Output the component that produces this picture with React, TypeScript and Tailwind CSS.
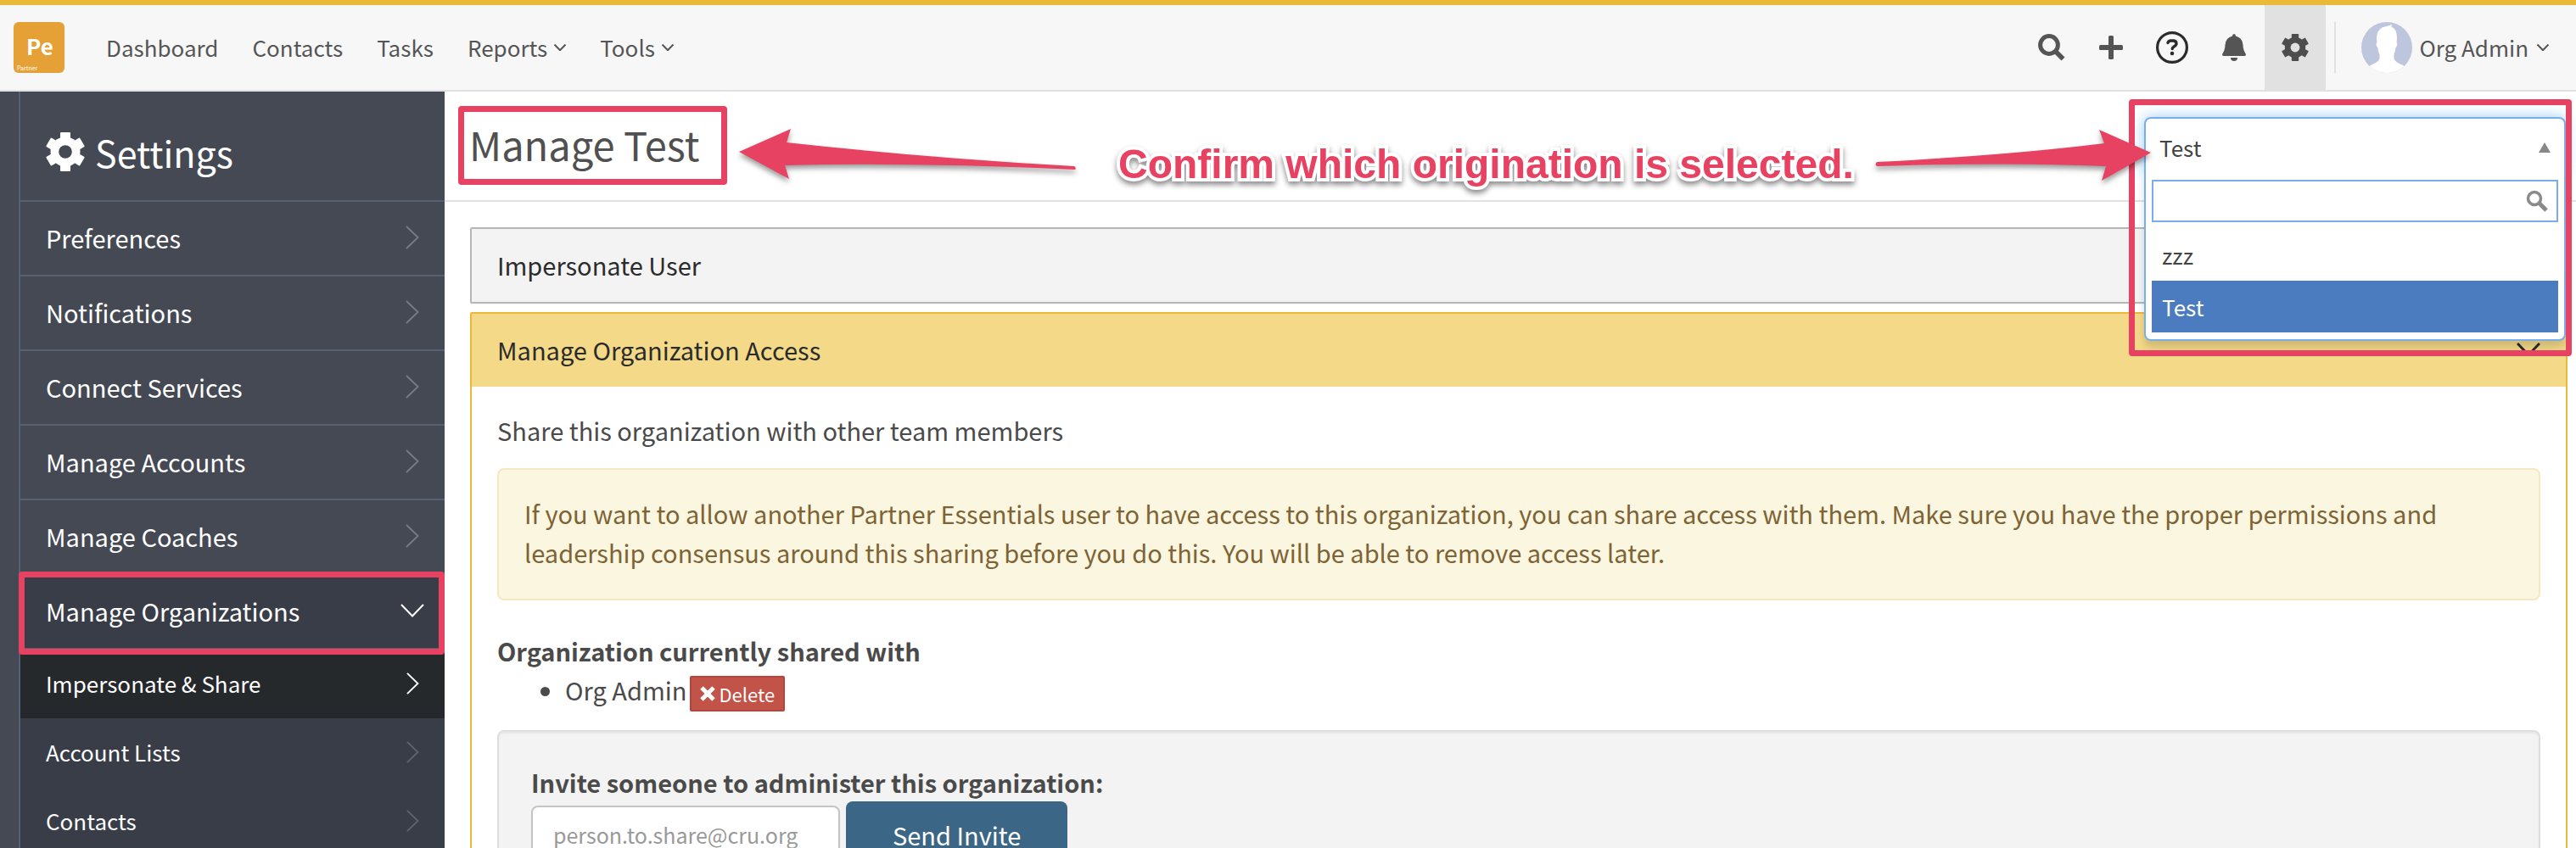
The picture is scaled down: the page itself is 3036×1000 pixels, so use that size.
import React, { useState } from "react";

type IconProps = { className: string };
type ChevronProps = IconProps & { width?: number };

function ChevronDown({ className, width = 1 }: ChevronProps) {
  return (
    <svg viewBox="0 0 28 16" fill="none" stroke="currentColor" strokeWidth={width} className={className} aria-hidden="true">
      <path d="M1 1 L14 14.5 L27 1" />
    </svg>
  );
}

function ChevronRight({ className, width = 1 }: ChevronProps) {
  return (
    <svg viewBox="0 0 16 28" fill="none" stroke="currentColor" strokeWidth={width} className={className} aria-hidden="true">
      <path d="M1 1 L14.5 14 L1 27" />
    </svg>
  );
}

function GearIcon({ className }: IconProps) {
  return (
    <svg viewBox="0 0 46 46" fill="currentColor" className={className} aria-hidden="true">
      <mask id="gear-hole">
        <rect width="46" height="46" fill="#fff" />
        <circle cx="23" cy="23" r="7.8" fill="#000" />
      </mask>
      <g mask="url(#gear-hole)">
        <circle cx="23" cy="23" r="17.5" />
        <rect x="17" y="0" width="12" height="46" rx="1" />
        <rect x="17" y="0" width="12" height="46" rx="1" transform="rotate(60 23 23)" />
        <rect x="17" y="0" width="12" height="46" rx="1" transform="rotate(120 23 23)" />
      </g>
    </svg>
  );
}

function SearchIcon({ className }: IconProps) {
  return (
    <svg viewBox="0 0 32 32" fill="none" stroke="currentColor" className={className} aria-hidden="true">
      <circle cx="13" cy="13" r="10.4" strokeWidth="5" />
      <path d="M21 21 L29.500 29.500" strokeWidth="5.600" />
    </svg>
  );
}

function PlusIcon({ className }: IconProps) {
  return (
    <svg viewBox="0 0 28 28" fill="currentColor" className={className} aria-hidden="true">
      <rect x="11" y="0" width="6" height="28" rx="1.5" />
      <rect x="0" y="11" width="28" height="6" rx="1.5" />
    </svg>
  );
}

function HelpIcon({ className }: IconProps) {
  return (
    <svg viewBox="0 0 38 38" fill="none" stroke="currentColor" className={className} aria-hidden="true">
      <circle cx="19" cy="19" r="17.400" strokeWidth="3.200" />
      <path d="M14 13.500 Q14.500 11 18 11 H20 Q24 11 24 14.300 Q24 16.500 21.500 17.800 Q19.200 19 19.200 20.500" strokeWidth="3.400" strokeLinecap="round" />
      <circle cx="19" cy="26" r="2.300" fill="currentColor" stroke="none" />
    </svg>
  );
}

function BellIcon({ className }: IconProps) {
  return (
    <svg viewBox="0 0 28 32" fill="currentColor" className={className} aria-hidden="true">
      <path d="M14 0 Q16 0 16 2.500 Q24 4.500 24.500 13 Q24.600 19 28 24 Q28 26 26.500 26 H1.500 Q0 26 0 24 Q3.400 19 3.500 13 Q4 4.500 12 2.500 Q12 0 14 0 Z" />
      <path d="M10 28 H18 Q18 32 14 32 Q10 32 10 28 Z" />
    </svg>
  );
}

function Logo() {
  return (
    <a href="#home" aria-label="Partner Essentials" className="flex size-[60px] flex-col justify-between rounded-md bg-[#e5a135] text-white">
      <span className="pt-3 pl-0.5 text-center text-[26px] leading-8 font-bold">Pe</span>
      <span className="pb-0.5 pl-1 text-[7px] leading-2">Partner</span>
    </a>
  );
}

function Avatar() {
  return (
    <svg viewBox="0 0 60 60" className="size-[60px]" aria-hidden="true">
      <defs>
        <clipPath id="avatar-clip">
          <circle cx="30" cy="30" r="30" />
        </clipPath>
      </defs>
      <g clipPath="url(#avatar-clip)">
        <rect width="60" height="60" fill="#bdc6dc" />
        <path
          fill="#fff"
          d="M18 20 C18 10 23 6 30 5 L36 3 L35.500 6 C40 7 42 12 42 19 L41.500 24 C43 25 42 29 40.500 30 C40 34 39 36 38.500 38 L38.500 43 C40 48 46 49 51 52 L56 62 H4 L9 52 C14 49 20 48 21.500 43 L21.500 38 C20.500 36 19.500 34 19.500 30 C17.500 29 17 25 18.500 24 Z"
        />
      </g>
    </svg>
  );
}

function TopNav() {
  const links = [
    { label: "Dashboard", menu: false },
    { label: "Contacts", menu: false },
    { label: "Tasks", menu: false },
    { label: "Reports", menu: true },
    { label: "Tools", menu: true },
  ];
  return (
    <header className="flex h-[108px] shrink-0 items-stretch border-t-[6px] border-b-2 border-t-[#eab937] border-b-[#e1e1e1] bg-[#f7f7f7] pl-4 text-[#555]">
      <div className="flex items-center">
        <Logo />
      </div>
      <nav className="ml-[49px] flex items-center gap-10 text-[26px] leading-9">
        {links.map((l) => (
          <a key={l.label} href={"#" + l.label.toLowerCase()} className="flex items-center gap-2">
            {l.label}
            {l.menu && <ChevronDown className="w-3.5" width={4} />}
          </a>
        ))}
      </nav>
      <div className="ml-auto flex items-stretch">
        <button aria-label="Search" className="flex w-[70px] items-center justify-center"><SearchIcon className="size-8" /></button>
        <button aria-label="Add" className="flex w-[70px] items-center justify-center"><PlusIcon className="size-7" /></button>
        <button aria-label="Help" className="flex w-[74px] items-center justify-center text-[#2b2b2b]"><HelpIcon className="size-[38px]" /></button>
        <button aria-label="Notifications" className="flex w-[72px] items-center justify-center"><BellIcon className="h-8 w-7" /></button>
        <button aria-label="Settings" className="flex w-[72px] items-center justify-center bg-[#e1e1e1] text-[#4d4d4d]"><GearIcon className="size-8" /></button>
        <div className="ml-2.5 flex items-center">
          <div className="h-[60px] w-0.5 bg-[#e1e1e1]" />
          <button className="ml-[30px] flex items-center text-[26px] leading-9">
            <Avatar />
            <span className="ml-2">Org Admin</span>
            <ChevronDown className="mr-8 ml-2.5 w-3.5" width={4} />
          </button>
        </div>
      </div>
    </header>
  );
}

function Sidebar() {
  const items = ["Preferences", "Notifications", "Connect Services", "Manage Accounts", "Manage Coaches"];
  const subItems = ["Impersonate & Share", "Account Lists", "Contacts"];
  return (
    <aside className="w-[524px] shrink-0 bg-[#444953] pl-[22px] text-white">
      <div className="min-h-full border-l-2 border-[#566070]">
        <h2 className="flex h-[130px] items-center gap-3 border-b-2 border-[#566070] pt-3.5 pl-[30px] text-[43px] leading-14">
          <GearIcon className="size-[46px]" />
          Settings
        </h2>
        <nav className="text-[29px] leading-10">
          {items.map((label) => (
            <a key={label} href="#settings" className="flex h-[88px] items-center justify-between border-b-2 border-[#566070] pr-[30px] pb-0.5 pl-[30px]">
              {label}
              <ChevronRight className="h-7 text-[#757982]" width={2} />
            </a>
          ))}
          <a href="#organizations" className="relative flex h-[88px] items-center justify-between border-b-2 border-[#566070] bg-[#393d47] pr-6 pb-0.5 pl-[30px]">
            Manage Organizations
            <ChevronDown className="w-7" width={2} />
            <span className="absolute -top-1 right-0 -bottom-2 -left-0.5 rounded-sm border-[7px] border-[#e84263]" />
          </a>
          <div className="text-[26px]">
            {subItems.map((label, i) => (
              <a
                key={label}
                href="#organization"
                className={
                  i === 0
                    ? "flex h-[81px] items-center justify-between bg-[#26292c] pr-[30px] pb-0.5 pl-[30px]"
                    : "flex h-[81px] items-center justify-between bg-[#393d47] pr-[30px] pb-0.5 pl-[30px]"
                }
              >
                {label}
                <ChevronRight className={i === 0 ? "h-[26px] text-white" : "h-[26px] text-[#5f636b]"} width={2} />
              </a>
            ))}
          </div>
        </nav>
      </div>
    </aside>
  );
}

function OrganizationSelect() {
  const [query, setQuery] = useState("");
  return (
    <div className="relative z-10 w-[497px] text-[26px] leading-9 text-[#444]">
      <button
        aria-haspopup="listbox"
        aria-expanded="true"
        aria-controls="organization-list"
        className="flex h-[70px] w-full items-center justify-between rounded-t-lg border-2 border-b-0 border-[#7aaeea] bg-white pr-4 pl-4 shadow-[0_0_16px_rgba(82,168,236,0.6)]"
      >
        Test
        <svg viewBox="0 0 14 12" className="w-3.5 text-[#888]" fill="currentColor" aria-hidden="true"><path d="M7 0 L14 12 H0 Z" /></svg>
      </button>
      <div className="absolute inset-x-0 top-[68px] rounded-b-lg border-2 border-t-0 border-[#7aaeea] bg-white px-[7px] pt-1.5 pb-2 shadow-[0_8px_10px_rgba(0,0,0,0.15)]">
        <div className="relative">
          <input
            aria-label="Search organizations"
            value={query}
            onChange={(e) => setQuery(e.target.value)}
            className="block h-[50px] w-full border-2 border-[#7aaeea] bg-white px-2 pr-10 outline-none"
          />
          <svg viewBox="0 0 26 26" className="absolute top-3 right-3 size-[26px] text-[#8a8a8a]" fill="none" stroke="currentColor" aria-hidden="true">
            <circle cx="10" cy="10" r="7.500" strokeWidth="3.500" />
            <path d="M16 16 L24 24" strokeWidth="5" />
          </svg>
        </div>
        <ul id="organization-list" role="listbox" className="pt-2">
          <li role="option" aria-selected="false" className="flex h-[61px] items-center px-3">zzz</li>
          <li role="option" aria-selected="true" className="flex h-[61px] items-center bg-[#4b7cbf] px-3 text-white">Test</li>
        </ul>
      </div>
      <span className="pointer-events-none absolute -top-[21px] -right-[7px] -left-[18px] h-[303px] rounded-sm border-[7px] border-[#e84263]" />
    </div>
  );
}

function PageHeader() {
  return (
    <div className="relative flex h-[130px] shrink-0 items-start justify-between border-b-2 border-[#e1e1e1] pr-3 pl-4">
      <h1 className="mt-[17px] flex h-[93px] w-[317px] items-center rounded-sm border-[7px] border-[#e84263] pb-1 pl-1.5 text-[47px] leading-14 text-[#505050]">
        Manage Test
      </h1>
      <svg viewBox="0 0 400 70" className="absolute top-[40px] left-[346px] z-20 h-[70px] w-[400px] drop-shadow-[0_4px_3px_rgba(0,0,0,0.4)]" fill="#e84263" aria-hidden="true">
        <path d="M1 31 L62 4 L57 20 Q220 38 396 48 Q399 50 397 52 Q200 43 55 47 L60 63 Z" />
      </svg>
      <p className="absolute top-[58px] left-[794px] z-20 font-['Liberation_Sans',sans-serif] text-[48px] leading-14 font-bold whitespace-nowrap text-[#e84263] [paint-order:stroke_fill] [-webkit-text-stroke:8px_white] drop-shadow-[0_4px_3px_rgba(0,0,0,0.45)]">
        Confirm which origination is selected.
      </p>
      <svg viewBox="0 0 330 70" className="absolute top-[40px] right-[498px] z-20 h-[70px] w-[330px] drop-shadow-[0_4px_3px_rgba(0,0,0,0.4)]" fill="#e84263" aria-hidden="true">
        <path d="M4 43 Q160 35 272 21 L266 5 L327 32 L269 65 L274 48 Q160 43 4 48 Q1 46 4 43 Z" />
      </svg>
      <div className="mt-[30px]">
        <OrganizationSelect />
      </div>
    </div>
  );
}

function Content() {
  const [email, setEmail] = useState("");
  return (
    <main className="flex min-w-0 flex-1 flex-col bg-white text-[#4a4a4a]">
      <PageHeader />
      <div className="flex flex-col gap-2.5 pt-[30px] pr-2.5 pl-[30px] text-[29px] leading-[46px]">
        <button className="flex h-[90px] items-center rounded-xs border-2 border-[#b6b6b6] bg-[#f3f3f3] px-[30px] pb-0.5 text-left text-[#2b2b2b] shadow-xs">
          Impersonate User
        </button>
        <section className="rounded-xs border-2 border-[#eab937]">
          <button className="flex h-[86px] w-full items-center justify-between bg-[#f4da88] px-[30px] pb-0.5 text-left text-[#2b2b2b]">
            Manage Organization Access
            <ChevronDown className="w-7" width={3} />
          </button>
          <div className="px-[30px] pt-7 pb-8">
            <p>Share this organization with other team members</p>
            <p className="mt-[22px] rounded-lg border-2 border-[#f6e7c3] bg-[#fbf6df] px-[30px] pt-7 pb-8 text-[#7d6335]">
              If you want to allow another Partner Essentials user to have access to this organization, you can share access with them. Make sure you have the proper permissions and
              <br />
              leadership consensus around this sharing before you do this. You will be able to remove access later.
            </p>
            <h3 className="mt-9 font-bold">Organization currently shared with</h3>
            <ul className="list-disc pl-20">
              <li>
                Org Admin
                <button className="ml-1 inline-flex h-[42px] items-center gap-1 rounded-xs border-2 border-[#b9423a] bg-[#c15349] px-2.5 align-middle text-[22px] leading-8 text-white">
                  <svg viewBox="0 0 18 18" className="size-[18px]" stroke="currentColor" strokeWidth="5" aria-hidden="true"><path d="M2 2 L16 16 M16 2 L2 16" /></svg>
                  Delete
                </button>
              </li>
            </ul>
            <div className="mt-[22px] rounded-lg border-2 border-[#dedede] bg-[#f3f3f3] px-[38px] pt-9 pb-10 shadow-[inset_0_2px_2px_rgba(0,0,0,0.05)]">
              <label htmlFor="invite-email" className="block font-bold">Invite someone to administer this organization:</label>
              <div className="flex items-center gap-[7px]">
                <input
                  id="invite-email"
                  type="email"
                  value={email}
                  onChange={(e) => setEmail(e.target.value)}
                  placeholder="person.to.share@cru.org"
                  className="h-[68px] w-[364px] rounded-lg border-2 border-[#c4c4c4] bg-white px-6 text-[25px] leading-9 placeholder:text-[#999]"
                />
                <button className="h-[78px] rounded-lg bg-[#3b6686] px-[55px] text-[29px] leading-9 text-white">Send Invite</button>
              </div>
            </div>
          </div>
        </section>
      </div>
    </main>
  );
}

export default function App() {
  return (
    <div className="flex h-screen flex-col overflow-hidden bg-white font-['Noto_Sans_CJK_SC',sans-serif]">
      <TopNav />
      <div className="flex min-h-0 flex-1 overflow-hidden">
        <Sidebar />
        <Content />
      </div>
    </div>
  );
}
